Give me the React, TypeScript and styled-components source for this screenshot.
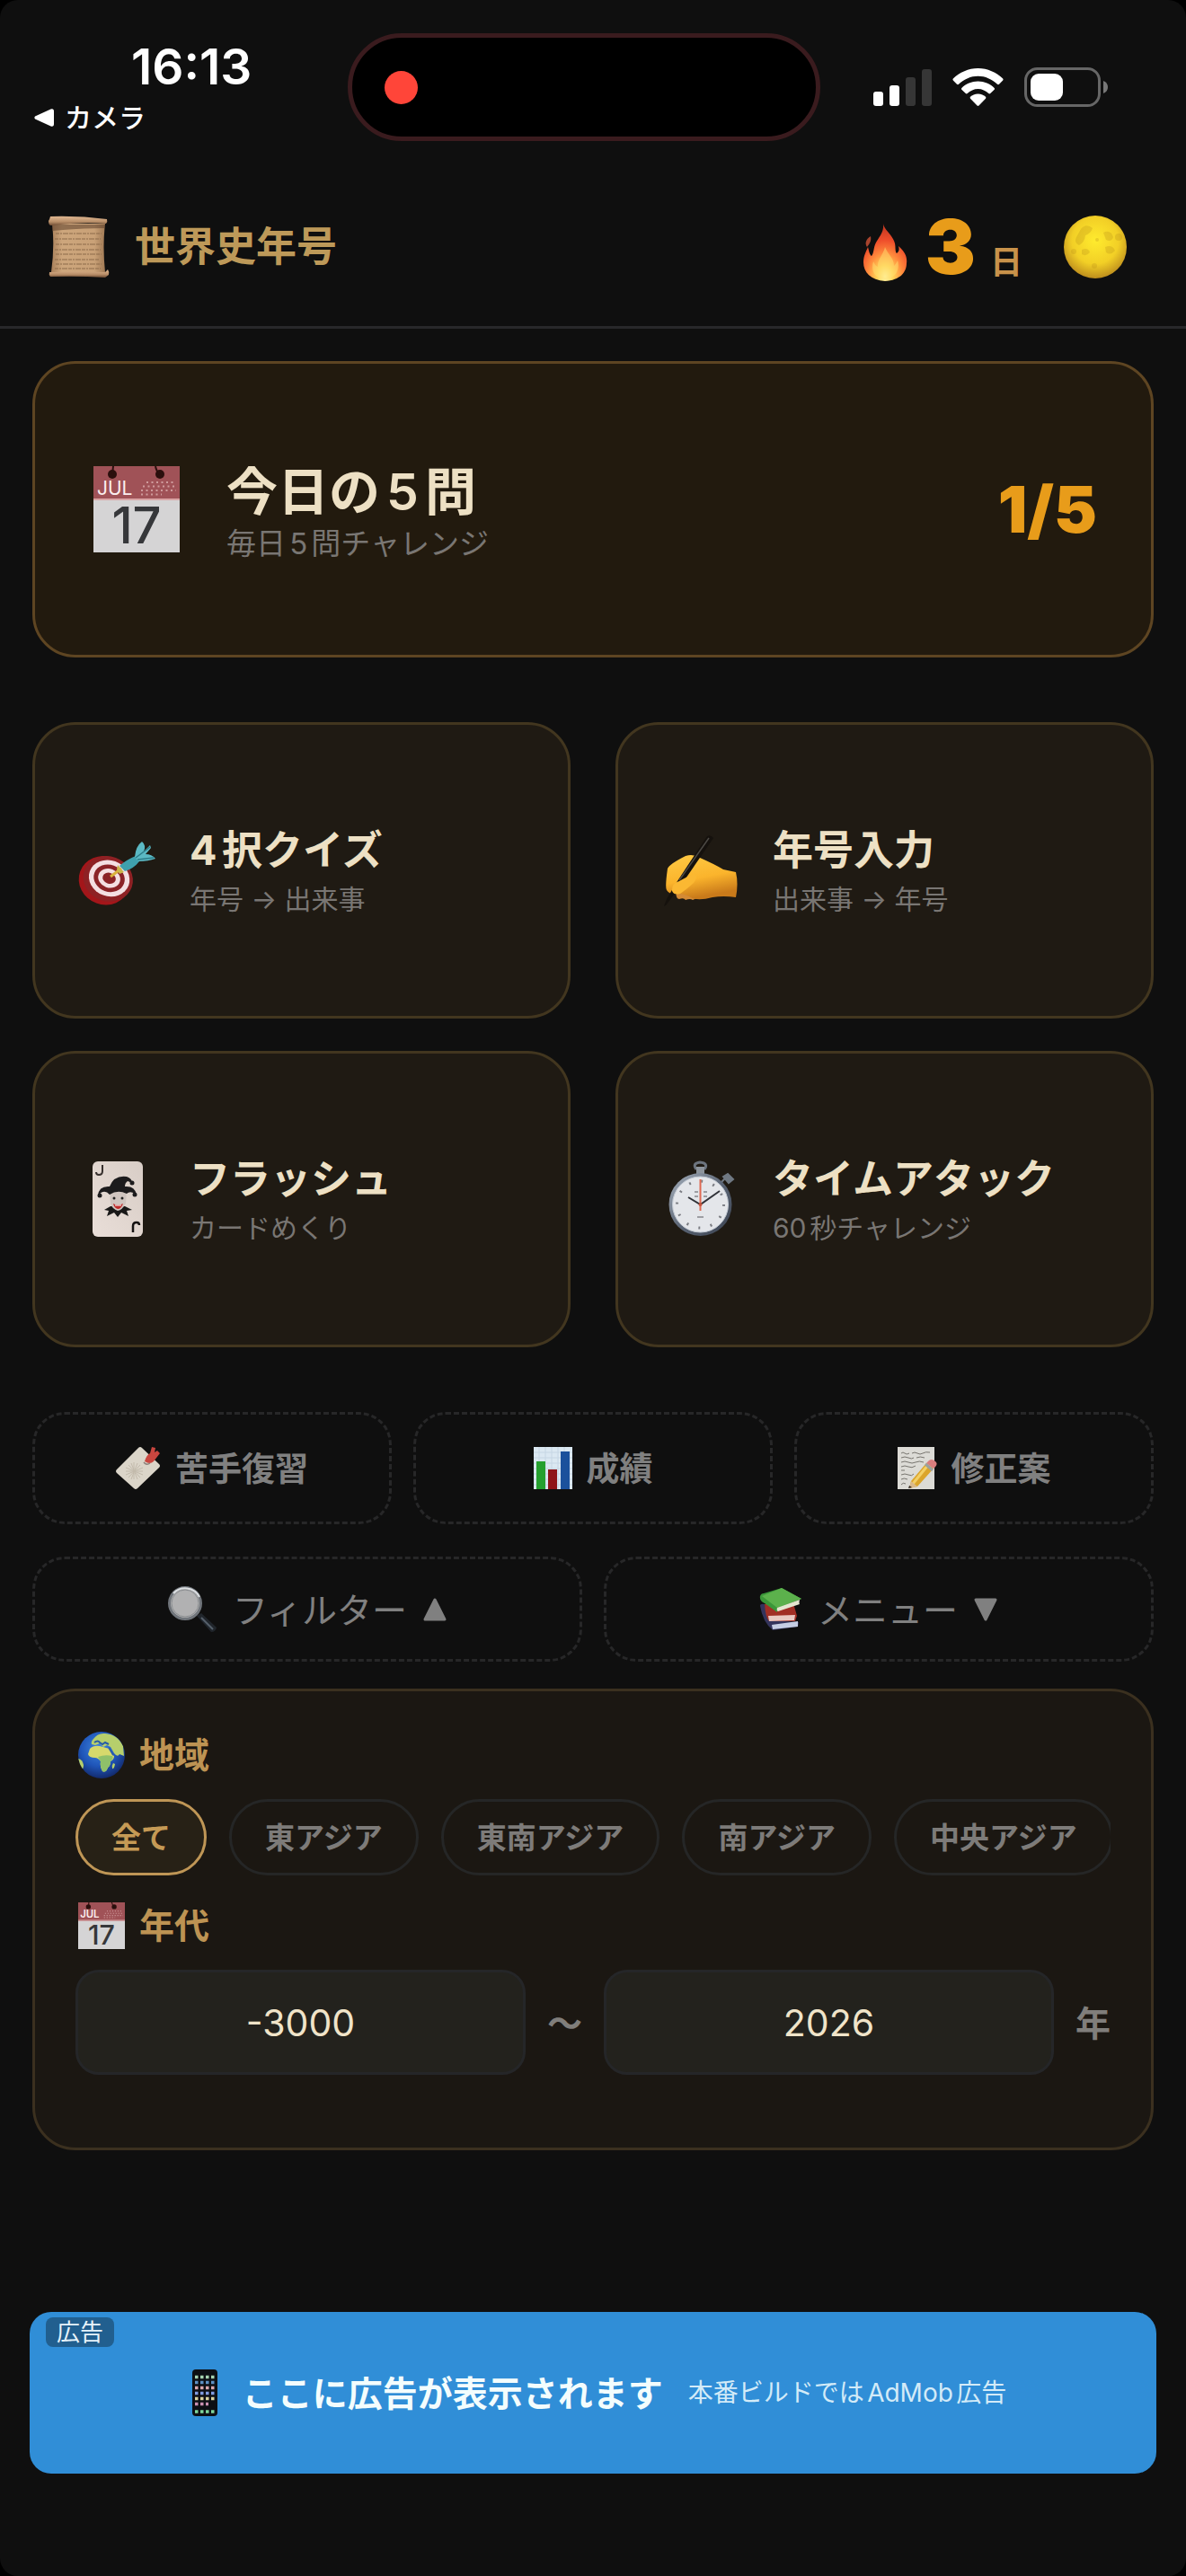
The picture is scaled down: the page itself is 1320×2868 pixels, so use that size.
import React, { useState } from "react";
import styled, { createGlobalStyle } from "styled-components";

const GlobalStyle = createGlobalStyle`
  * { box-sizing: border-box; }
  body {
    margin: 0;
    background: #000;
    font-family: Inter, "Noto Sans CJK JP", sans-serif;
    font-kerning: none;
    text-autospace: normal;
  }
  button, input { font-family: inherit; color: inherit; }
  button { cursor: pointer; }
  svg { display: block; flex: none; overflow: visible; }
`;

const Screen = styled.div`
  min-height: 100vh;
  display: flex;
  flex-direction: column;
  background: #0f0f0f;
  border-radius: 20px;
  overflow: hidden;
`;

/* ---------- status bar ---------- */

const StatusBar = styled.div`
  display: grid;
  grid-template-columns: 1fr auto 1fr;
  align-items: center;
  padding: 37px 20px 29px 0;
  color: #fff;
`;

const StatusLeft = styled.div`
  display: flex;
  flex-direction: column;
  gap: 6px;
  padding-left: 38px;
`;

const Clock = styled.time`
  padding-left: 108px;
  font-size: 55px;
  line-height: 62px;
  font-weight: 600;
`;

const BackButton = styled.button`
  display: flex;
  align-items: center;
  gap: 12px;
  padding: 0;
  border: 0;
  background: none;
  font-size: 30px;
  line-height: 40px;
  font-weight: 500;
`;

const Island = styled.div`
  width: 526px;
  height: 120px;
  display: flex;
  align-items: center;
  padding-left: 36px;
  border: 5px solid #3a1b1e;
  border-radius: 60px;
  background: #000;
`;

const RecDot = styled.span`
  width: 37px;
  height: 37px;
  border-radius: 50%;
  background: #ff4539;
`;

const StatusRight = styled.div`
  display: flex;
  align-items: center;
  justify-content: flex-end;
  gap: 23px;
  padding-right: 66px;
`;

/* ---------- header ---------- */

const Header = styled.header`
  height: 180px;
  display: flex;
  align-items: center;
  justify-content: space-between;
  padding: 0 66px 0 54px;
  border-bottom: 3px solid #28282a;
`;

const Brand = styled.div`
  display: flex;
  align-items: center;
  gap: 28px;
`;

const BrandName = styled.h1`
  margin: 0;
  font-size: 45px;
  line-height: 60px;
  font-weight: 600;
  color: #bd9959;
`;

const HeaderRight = styled.div`
  display: flex;
  align-items: center;
  gap: 46px;
`;

const Streak = styled.div`
  display: flex;
  align-items: flex-end;
  gap: 20px;
`;

const StreakCount = styled.div`
  display: flex;
  align-items: baseline;
  gap: 16px;
  font-size: 84px;
  line-height: 84px;
  font-weight: 900;
  color: #e89c1a;
`;

const StreakUnit = styled.span`
  font-size: 36px;
  line-height: 36px;
  font-weight: 600;
  color: #c8924a;
`;

const ThemeButton = styled.button`
  padding: 0;
  border: 0;
  background: none;
`;

/* ---------- main ---------- */

const Main = styled.main`
  flex: 1;
  padding: 36px 36px 0;
`;

const Card = styled.button<{ $hero?: boolean }>`
  width: 100%;
  height: 330px;
  display: flex;
  align-items: center;
  gap: ${(p) => (p.$hero ? "48px" : "36px")};
  padding: ${(p) => (p.$hero ? "0 60px" : "0 48px")};
  border: 3px solid ${(p) => (p.$hero ? "#5e4522" : "#42361f")};
  border-radius: 48px;
  background: ${(p) => (p.$hero ? "#221a0e" : "#1f1a13")};
  text-align: left;
`;

const CardIcon = styled.span<{ $hero?: boolean }>`
  width: ${(p) => (p.$hero ? "105px" : "88px")};
  display: flex;
  justify-content: center;
  flex: none;
`;

const CardText = styled.span`
  display: flex;
  flex-direction: column;
  padding-top: 4px;
`;

const CardTitle = styled.span<{ $hero?: boolean }>`
  font-size: ${(p) => (p.$hero ? "57px" : "45px")};
  line-height: ${(p) => (p.$hero ? "72px" : "60px")};
  font-weight: ${(p) => (p.$hero ? 600 : 700)};
  color: #ede0c4;
`;

const CardSub = styled.span<{ $hero?: boolean }>`
  font-size: ${(p) => (p.$hero ? "33px" : "30px")};
  line-height: ${(p) => (p.$hero ? "42px" : "48px")};
  color: #797673;
`;

const Progress = styled.span`
  margin-left: auto;
  font-size: 72px;
  line-height: 84px;
  font-weight: 900;
  color: #e89c1a;
`;

const ModeGrid = styled.div`
  display: grid;
  grid-template-columns: 1fr 1fr;
  gap: 36px 50px;
  margin: 72px 0;
`;

const DashedRow = styled.div<{ $cols: number }>`
  display: grid;
  grid-template-columns: repeat(${(p) => p.$cols}, 1fr);
  gap: 24px;
  margin-bottom: ${(p) => (p.$cols === 3 ? "36px" : "30px")};
`;

const DashedButton = styled.button<{ $tall?: boolean }>`
  height: ${(p) => (p.$tall ? "125px" : "117px")};
  display: flex;
  align-items: center;
  justify-content: center;
  gap: ${(p) => (p.$tall ? "16px" : "18px")};
  padding: 0;
  border: 3px dashed #272728;
  border-radius: 36px;
  background: none;
  color: #808080;
  font-size: ${(p) => (p.$tall ? "37px" : "39px")};
  font-weight: ${(p) => (p.$tall ? 600 : 400)};
`;

const ButtonText = styled.span`
  padding-bottom: 4px;
`;

/* ---------- filter panel ---------- */

const Panel = styled.section`
  padding: 45px 45px 81px;
  border: 3px solid #3b301f;
  border-radius: 48px;
  background: #1b1712;
`;

const PanelLabel = styled.label`
  height: 51px;
  display: flex;
  align-items: center;
  gap: 16px;
  padding-left: 3px;
  margin-bottom: 24px;
  font-size: 39px;
  line-height: 51px;
  font-weight: 600;
  color: #bd9353;
`;

const Chips = styled.div`
  display: flex;
  gap: 25px;
  margin-bottom: 30px;
  overflow: hidden;
`;

const Chip = styled.button<{ $active: boolean }>`
  flex: none;
  height: 85px;
  padding: 0 37px 4px;
  border: 3px solid ${(p) => (p.$active ? "#bf9656" : "#252626")};
  border-radius: 43px;
  background: ${(p) => (p.$active ? "#272116" : "transparent")};
  color: ${(p) => (p.$active ? "#c59a55" : "#7d7b79")};
  font-size: 33px;
  font-weight: 600;
`;

const YearRow = styled.div`
  display: flex;
  align-items: center;
  gap: 24px;
`;

const YearText = styled.span`
  padding-bottom: 4px;
  font-size: 39px;
  font-weight: 600;
  color: #807e7b;
`;

const YearInput = styled.input`
  flex: 1;
  min-width: 0;
  height: 117px;
  padding: 0;
  border: 3px solid #252628;
  border-radius: 26px;
  background: #23221d;
  color: #f0e4c9;
  font-size: 41px;
  text-align: center;
  outline: none;
`;

/* ---------- ad ---------- */

const AdBanner = styled.aside`
  position: relative;
  height: 180px;
  display: flex;
  align-items: center;
  justify-content: center;
  gap: 28px;
  padding-left: 14px;
  margin: 0 33px 114px;
  border-radius: 24px;
  background: #308ed7;
`;

const AdBadge = styled.span`
  position: absolute;
  top: 6px;
  left: 18px;
  padding: 0 12px;
  border-radius: 8px;
  background: #215f8f;
  color: #e6f3fa;
  font-size: 26px;
  line-height: 33px;
`;

const AdTitle = styled.strong`
  font-size: 39px;
  line-height: 51px;
  font-weight: 700;
  color: #f3fdfd;
`;

const AdNote = styled.span`
  font-size: 28px;
  line-height: 51px;
  color: #d3ebf8;
`;

/* ---------- icons ---------- */

const SignalIcon = () => (
  <svg width="65" height="41" viewBox="0 0 65 41">
    <rect x="0" y="25" width="11" height="16" rx="3" fill="#fff" />
    <rect x="18" y="18" width="11" height="23" rx="3" fill="#fff" />
    <rect x="36" y="9" width="11" height="32" rx="3" fill="#363636" />
    <rect x="54" y="0" width="11" height="41" rx="3" fill="#363636" />
  </svg>
);

const WifiIcon = () => (
  <svg width="57" height="42" viewBox="0 0 57 42" fill="#fff">
    <path d="M28.500 0C39 0 49 4.500 56.200 11.600Q57 12.500 56.200 13.400L52 17.800Q51 18.700 50 17.800C44 12 36.500 8.700 28.500 8.700S13 12 7 17.800Q6 18.700 5 17.800L.8 13.400Q0 12.500.8 11.600C8 4.500 18 0 28.500 0Z" />
    <path d="M28.500 14.500C35.500 14.500 42 17.400 46.700 21.900Q47.500 22.800 46.700 23.700L42.200 28Q41.300 28.800 40.300 28C37.200 25 33 23 28.500 23S19.800 25 16.700 28Q15.700 28.800 14.800 28L10.300 23.700Q9.500 22.800 10.300 21.900C15 17.400 21.500 14.500 28.500 14.500Z" />
    <path d="M28.500 28.500C32 28.500 35 30 37 31.800Q37.800 32.800 37 33.700L29.500 41.500Q28.500 42.300 27.500 41.500L20 33.700Q19.200 32.800 20 31.800C22 30 25 28.500 28.500 28.500Z" />
  </svg>
);

const BatteryIcon = () => (
  <svg width="94" height="44" viewBox="0 0 94 44">
    <rect x="1.500" y="1.500" width="82" height="41" rx="13" fill="none" stroke="#666" strokeWidth="3" />
    <rect x="7" y="7" width="36" height="30" rx="9" fill="#fff" />
    <path d="M88 15Q93 17 93 22T88 29Z" fill="#777" />
  </svg>
);

const ScrollIcon = () => (
  <svg width="68" height="70" viewBox="0 0 68 70">
    <defs>
      <linearGradient id="paper" x1="0" x2="1">
        <stop offset="0" stopColor="#a9805a" />
        <stop offset=".2" stopColor="#cda67c" />
        <stop offset=".8" stopColor="#c9a177" />
        <stop offset="1" stopColor="#a07954" />
      </linearGradient>
      <linearGradient id="roll" x1="0" y1="0" x2="0" y2="1">
        <stop offset="0" stopColor="#e0b892" />
        <stop offset=".6" stopColor="#b98f69" />
        <stop offset="1" stopColor="#6f4d34" />
      </linearGradient>
    </defs>
    <path d="M4 9H63Q60 34 63 63H3Q7 34 4 9Z" fill="url(#paper)" />
    <path d="M4 10H63V14Q35 14 4 17Z" fill="#5d402c" opacity=".55" />
    <g stroke="#8c6a4b" strokeWidth="1" strokeDasharray="4 1 2 1 6 1">
      <path d="M8 20H59M7 26H58M8 32H59M7 38H58M8 43H59M7 49H57M8 54H59M7 59H58" />
    </g>
    <path d="M2 1Q34 0 65 4Q66 7 64 9Q34 7 3 11Q0 11 0 6Q1 5 2 1Z" fill="url(#roll)" />
    <path d="M1 63Q34 62 63 63L66 60Q68 63 67 66L63 69Q34 67 2 68Q0 66 1 63Z" fill="url(#roll)" />
  </svg>
);

const FireIcon = () => (
  <svg width="49" height="68" viewBox="0 0 49 68">
    <defs>
      <radialGradient id="flame" cx=".5" cy=".92" r=".85">
        <stop offset="0" stopColor="#fff9b0" />
        <stop offset=".22" stopColor="#ffd458" />
        <stop offset=".48" stopColor="#ff8a3c" />
        <stop offset=".75" stopColor="#ee4d2b" />
        <stop offset="1" stopColor="#c93a22" />
      </radialGradient>
    </defs>
    <path d="M22 0C23 7 33 13 35 22C36 27 35 31 37 33C40 31 40 28 39 25C46 31 49 37 48 44C48 54 41 63 24 64C8 63 0 54 0 43C0 36 3 31 5 26C6 30 7 35 9 36C12 32 11 26 14 21C18 14 23 9 22 0Z" fill="url(#flame)" />
    <path d="M8 14C9 19 7 22 4 26C1 22 3 17 8 14Z" fill="#a8442e" />
    <path d="M24 26C27 34 34 38 34 47C36 45 37 43 38 41C41 51 36 61 24 62C12 61 8 52 11 42C13 46 14 47 16 48C15 40 22 35 24 26Z" fill="#ffdf70" opacity=".5" />
  </svg>
);

const MoonIcon = () => (
  <svg width="70" height="70" viewBox="0 0 70 70">
    <defs>
      <radialGradient id="moon" cx=".5" cy=".4" r=".62">
        <stop offset="0" stopColor="#ffeb2e" />
        <stop offset=".6" stopColor="#f2cf26" />
        <stop offset="1" stopColor="#b8871c" />
      </radialGradient>
    </defs>
    <circle cx="35" cy="35" r="35" fill="url(#moon)" />
    <g fill="#b88e18" opacity=".28">
      <path d="M19 15Q25 8 32 14Q30 20 24 22Q23 30 17 33Q11 30 14 24Z" />
      <path d="M44 19Q52 15 55 24Q53 30 47 27Z" />
      <path d="M20 38Q27 35 29 41Q25 46 20 43Z" />
      <path d="M46 35Q54 32 57 39Q52 45 47 41Z" />
      <circle cx="61" cy="24" r="4" />
      <circle cx="11" cy="40" r="3" />
      <circle cx="37" cy="27" r="2" />
      <circle cx="34" cy="56" r="3" />
    </g>
  </svg>
);

const CalendarIcon = ({ size }: { size: number }) => (
  <svg width={size} height={size} viewBox="0 0 96 96">
    <rect width="96" height="96" fill="#d5d4d5" />
    <rect width="96" height="38" fill="#a05257" />
    <rect y="36" width="96" height="2" fill="#d9a5a5" />
    <circle cx="21" cy="9" r="5" fill="#2b0f0d" />
    <circle cx="74" cy="9" r="5" fill="#2b0f0d" />
    <path d="M21 9L22 0M74 9Q70 6 69 0" stroke="#2b0f0d" strokeWidth="2" fill="none" />
    <path d="M59 18H92M55 22.500H92M53 27H92M53 31.500H76" stroke="#cf9c9d" strokeWidth="2" strokeDasharray="2 3.500" />
    <text x="4" y="32" fontSize="21" fill="#fbeeee" fontFamily="Inter, sans-serif">JUL</text>
    <text x="48" y="86" fontSize="56" fill="#36373a" textAnchor="middle" fontWeight="500" fontFamily="Inter, sans-serif">17</text>
  </svg>
);

const TargetIcon = () => (
  <svg width="84" height="84" viewBox="0 -10 84 84">
    <g transform="rotate(20 30 42)">
      <ellipse cx="28" cy="44" rx="29" ry="27" fill="#a3161a" />
      <ellipse cx="31" cy="41" rx="28" ry="25" fill="#8e2124" />
      <ellipse cx="32" cy="40" rx="23" ry="20" fill="#f4dfe2" />
      <ellipse cx="32" cy="40" rx="17.500" ry="15" fill="#8b2327" />
      <ellipse cx="32" cy="40" rx="12.500" ry="10.500" fill="#f4dfe2" />
      <ellipse cx="32" cy="40" rx="7.500" ry="6" fill="#8b2327" />
    </g>
    <path d="M34 39L46 30" stroke="#d9b13a" strokeWidth="3" />
    <path d="M42 26L49 34L44 36L41 31Z" fill="#c9b64a" />
    <path d="M44 27Q52 20 62 16L66 22Q60 30 50 33Z" fill="#3fa0ad" />
    <path d="M61 17Q62 5 69 0Q74 4 71 11L78 4L79 7L73 14Q80 14 84 19Q76 22 65 22Z" fill="#5bb9c4" />
    <path d="M62 18L78 6M64 20L82 18" stroke="#2b7c89" strokeWidth="1.500" />
  </svg>
);

const HandIcon = () => (
  <svg width="82" height="79" viewBox="0 0 82 79">
    <defs>
      <linearGradient id="skin" x1="0" y1="0" x2=".3" y2="1">
        <stop offset="0" stopColor="#ffcb45" />
        <stop offset=".6" stopColor="#fbb42c" />
        <stop offset="1" stopColor="#c97a1a" />
      </linearGradient>
    </defs>
    <path d="M14 60Q12 70 17 71Q22 69 24 72Q29 70 32 72Q37 69 40 71L38 58Z" fill="#d48a35" />
    <path d="M4 37Q6 32 24 23Q32 20 40 25Q56 32 66 38L80 41Q83 54 80 69Q66 67 54 69Q36 74 28 68Q20 64 12 65Q6 66 3 61Q1 58 4 37Z" fill="url(#skin)" />
    <path d="M48 1Q52 -1 55 3L20 54L2 78L0 79L3 71L13 54Z" fill="#15110d" />
    <path d="M50 3L17 50" stroke="#4d4a45" strokeWidth="1.500" />
    <path d="M9 62Q8 54 17 51Q26 46 33 43Q39 44 33 53Q24 61 18 65Q11 67 9 62Z" fill="#fbb832" />
  </svg>
);

const JokerIcon = () => (
  <svg width="56" height="84" viewBox="0 0 56 84">
    <defs>
      <linearGradient id="card" x1="1" x2="0" y2="1">
        <stop offset="0" stopColor="#d8cdc6" />
        <stop offset="1" stopColor="#e9ded8" />
      </linearGradient>
    </defs>
    <rect width="56" height="84" rx="6" fill="url(#card)" />
    <path d="M11 4V11Q11 15 7 15Q4 15 4 12" stroke="#37302e" strokeWidth="2" fill="none" />
    <path d="M45 79V72Q45 68 49 68Q52 68 52 71" stroke="#161313" strokeWidth="2.500" fill="none" />
    <path d="M13 54L20 50H36L44 54L38 55L40 61L32 57L28 62L24 57L16 61L18 55Z" fill="#191818" />
    <path d="M19 33H38L37 47Q33 54 28 55Q22 53 20 47Z" fill="#cfc4bf" />
    <path d="M6 38Q7 27 19 28Q24 15 38 17Q44 19 44 24L39 22Q36 24 36 28Q47 27 49 37Q42 32 38 36Q28 31 19 37Q13 30 6 38Z" fill="#1c1b1d" />
    <circle cx="8" cy="38" r="2.500" fill="#1c1b1d" />
    <circle cx="44" cy="24" r="2.500" fill="#1c1b1d" />
    <circle cx="47" cy="37" r="2.500" fill="#1c1b1d" />
    <circle cx="24" cy="41" r="1.500" fill="#222" />
    <circle cx="33" cy="41" r="1.500" fill="#222" />
    <path d="M23 47Q28 50 34 47Q32 53 28 53Q24 52 23 47Z" fill="#bf2a2a" />
    <path d="M25 49H32" stroke="#fff" strokeWidth="1" />
  </svg>
);

const StopwatchIcon = () => (
  <svg width="72" height="84" viewBox="0 0 72 84">
    <defs>
      <linearGradient id="steel" x1="0" y1="0" x2="1" y2="1">
        <stop offset="0" stopColor="#a9b3bf" />
        <stop offset=".5" stopColor="#5c6676" />
        <stop offset="1" stopColor="#39414f" />
      </linearGradient>
    </defs>
    <path d="M31 9Q26 2 35 1Q45 2 40 9" stroke="#6c747e" strokeWidth="3" fill="none" />
    <rect x="31" y="6" width="9" height="9" fill="#8d949c" />
    <path d="M58 24L64 18M61 17L66 14L72 20L67 24Z" stroke="#707983" strokeWidth="2" fill="#707983" />
    <circle cx="35.500" cy="48" r="35" fill="url(#steel)" />
    <circle cx="35.500" cy="48" r="31" fill="#e4e6ea" stroke="#c3cad4" strokeWidth="1" />
    <circle cx="35.500" cy="48" r="26" fill="none" stroke="#7b7d83" strokeWidth="3" strokeDasharray="2 11.610" />
    <path d="M29 34H33M39 34H43M29 39H33M39 39H43M32 62H39" stroke="#85878c" strokeWidth="1.500" />
    <path d="M35.500 20V55" stroke="#df6a52" strokeWidth="2" />
    <path d="M22 40L35.500 48L57 33" stroke="#303238" strokeWidth="2" fill="none" />
    <circle cx="35.500" cy="48" r="2" fill="#c6543d" />
  </svg>
);

const TagIcon = () => (
  <svg width="50" height="47" viewBox="0 0 50 47">
    <path d="M25 1Q27-1 29 1L48 19Q50 21 48 23L24 46Q22 48 20 46L1 29Q-1 27 1 25Z" fill="#dbd5c9" />
    <g stroke="#c2baab" strokeWidth="1">
      <path d="M20 17V36M11 27H30M14 20L27 34M27 20L14 34M17 18L24 36M24 18L17 36M11 23L30 31M11 31L30 23" />
    </g>
    <path d="M32 16Q34 9 38 7L40 0L44 1L43 6L46 4L49 7L42 16Q38 20 32 16Z" fill="#c9463f" />
    <path d="M31 17Q34 21 38 18" stroke="#8d817a" strokeWidth="1.500" fill="none" />
  </svg>
);

const ChartIcon = () => (
  <svg width="43" height="47" viewBox="0 0 43 47">
    <rect width="43" height="47" fill="#dbe8f2" />
    <path d="M0 6H43M0 12H43M0 18H43M0 24H43M0 30H43M0 36H43M0 42H43M6 0V47M13 0V47M20 0V47M27 0V47M34 0V47" stroke="#c6d6e4" strokeWidth="1" />
    <rect x="3" y="16" width="10" height="31" fill="#25a02f" />
    <rect x="16" y="25" width="10" height="22" fill="#8f1418" />
    <rect x="30" y="5" width="10" height="42" fill="#1b519c" />
  </svg>
);

const MemoIcon = () => (
  <svg width="44" height="47" viewBox="0 0 44 47">
    <rect width="41" height="47" fill="#dcdbd6" />
    <path d="M4 7Q6 5 8 7T13 7M16 7Q19 5 22 7T28 7T36 6M4 12Q8 10 12 12T18 12M21 12Q25 10 30 12M4 17Q8 15 12 17T20 17T29 17M4 22Q8 20 12 22T20 21M4 26H8M4 31Q8 29 12 31T18 30M4 36Q7 34 11 36M4 42Q6 39 9 41" stroke="#77756f" strokeWidth="1" fill="none" />
    <path d="M32 18L40 24L22 44L13 46L15 38Z" fill="#dba52b" />
    <path d="M34 20L17 41" stroke="#f3d067" strokeWidth="3" />
    <path d="M15 38L22 44L13 46Z" fill="#d9b98c" />
    <path d="M13 43L16 45L12 46Z" fill="#2b2520" />
    <path d="M32 18L35 15Q39 12 43 17Q45 20 40 24Z" fill="#d97d7d" />
    <path d="M31 19L39 26" stroke="#9aa09f" strokeWidth="3" />
  </svg>
);

const MagnifierIcon = () => (
  <svg width="54" height="52" viewBox="0 0 54 52">
    <path d="M32 33L37 30L54 46Q53 51 48 51Z" fill="#20252b" />
    <path d="M37 35L50 48" stroke="#55606b" strokeWidth="2" />
    <circle cx="19" cy="19" r="17.500" fill="#b1b1b2" stroke="#70757b" strokeWidth="3" />
    <path d="M6 8A18 18 0 0 1 35 12" stroke="#dcdfe2" strokeWidth="2" fill="none" />
    <circle cx="19" cy="19" r="15" fill="none" stroke="#8b8e91" strokeWidth="1" />
  </svg>
);

const BooksIcon = () => (
  <svg width="46" height="48" viewBox="0 0 46 48">
    <path d="M0 20Q0 17 5 18L10 36L43 38L42 43L14 47Q3 38 0 20Z" fill="#34345c" />
    <path d="M13 41L42 37V43L14 46Z" fill="#c5cde3" />
    <path d="M5 18L37 17L41 31L39 37H10Q6 33 5 18Z" fill="#a12f25" />
    <path d="M9 31L39 30L38 36L10 37Z" fill="#e9c9c2" />
    <path d="M0 9Q1 6 4 6L24 0L46 12L19 23L19 27L5 17Q-1 14 0 9Z" fill="#3b9739" />
    <path d="M24 0L46 12L19 22L2 9Z" fill="#5cb14c" />
    <path d="M19 22L44 13Q43 17 44 18L20 26Q18 25 19 22Z" fill="#e5e6cf" />
  </svg>
);

const GlobeIcon = () => (
  <svg width="52" height="52" viewBox="0 0 52 52">
    <defs>
      <radialGradient id="sea" cx=".45" cy=".35" r=".65">
        <stop offset="0" stopColor="#3f86e0" />
        <stop offset=".6" stopColor="#1f55b8" />
        <stop offset="1" stopColor="#132b6e" />
      </radialGradient>
      <clipPath id="earth"><circle cx="26" cy="26" r="26" /></clipPath>
    </defs>
    <circle cx="26" cy="26" r="26" fill="url(#sea)" />
    <g clipPath="url(#earth)" fill="#b6cf6c">
      <path d="M17 8Q22 1 30 2Q44 3 50 16L51 27L46 25Q44 29 40 24L36 17L32 15L28 17L24 13L19 15L15 14Q14 11 17 8Z" />
      <path d="M13 19Q17 15 24 16Q31 18 35 19L38 26L40 27Q40 31 36 33Q36 38 33 40Q31 46 27 44Q24 39 25 33Q22 29 19 29Q12 29 11 25Z" fill="#d6d96c" />
      <path d="M22 28Q30 25 38 27Q40 30 36 33Q36 38 33 40Q31 46 27 44Q24 38 25 33Z" fill="#8fc06a" />
      <path d="M39 35L41 36Q40 42 38 41Q37 38 39 35Z" />
      <path d="M0 30Q5 31 6 37Q6 42 3 43L0 38Z" />
    </g>
    <path d="M18 12Q22 9 24 12L27 14L30 12L34 14" stroke="#275ca6" strokeWidth="2" fill="none" />
    <path d="M34 18L39 26" stroke="#275ca6" strokeWidth="1.500" />
  </svg>
);

const PhoneIcon = () => (
  <svg width="28" height="52" viewBox="0 0 28 52">
    <rect width="28" height="52" rx="4" fill="#0d0f14" />
    <g strokeWidth="3.500" strokeDasharray="3.500 2.500">
      <path d="M3 8.500H26" stroke="#a6d3b0" />
      <path d="M3 14.500H26" stroke="#5c8fc2" />
      <path d="M3 20.500H26" stroke="#d9a7ae" />
      <path d="M3 26.500H26" stroke="#7f9be0" />
      <path d="M3 32.500H26" stroke="#d7d3a0" />
      <path d="M3 38.500H18" stroke="#c98fb0" />
      <path d="M3 47H26" stroke="#7fd69c" />
    </g>
  </svg>
);

const Arrow = ({ up }: { up?: boolean }) => (
  <svg width="26" height="26" viewBox="0 0 26 26" fill="#808080" stroke="#808080" strokeWidth="3" strokeLinejoin="round">
    <path d={up ? "M13 2L24 24H2Z" : "M2 2H24L13 24Z"} />
  </svg>
);

const modes = [
  { icon: <TargetIcon />, title: "4択クイズ", sub: "年号 → 出来事" },
  { icon: <HandIcon />, title: "年号入力", sub: "出来事 → 年号" },
  { icon: <JokerIcon />, title: "フラッシュ", sub: "カードめくり" },
  { icon: <StopwatchIcon />, title: "タイムアタック", sub: "60秒チャレンジ" },
];

const regions = ["全て", "東アジア", "東南アジア", "南アジア", "中央アジア"];

export default function App() {
  const [region, setRegion] = useState("全て");
  const [from, setFrom] = useState("-3000");
  const [to, setTo] = useState("2026");

  return (
    <Screen lang="ja">
      <GlobalStyle />
      <StatusBar>
        <StatusLeft>
          <Clock>16:13</Clock>
          <BackButton>
            <svg width="22" height="20" viewBox="0 0 22 20" fill="#fff">
              <path d="M1 8.500L18.500.5Q22-.5 22 3V17Q22 20.500 18.500 19.500L1 11.500Q-.5 10 1 8.500Z" />
            </svg>
            カメラ
          </BackButton>
        </StatusLeft>
        <Island>
          <RecDot />
        </Island>
        <StatusRight>
          <SignalIcon />
          <WifiIcon />
          <BatteryIcon />
        </StatusRight>
      </StatusBar>

      <Header>
        <Brand>
          <ScrollIcon />
          <BrandName>世界史年号</BrandName>
        </Brand>
        <HeaderRight>
          <Streak>
            <FireIcon />
            <StreakCount>
              3<StreakUnit>日</StreakUnit>
            </StreakCount>
          </Streak>
          <ThemeButton aria-label="テーマ">
            <MoonIcon />
          </ThemeButton>
        </HeaderRight>
      </Header>

      <Main>
        <Card $hero>
          <CardIcon $hero>
            <CalendarIcon size={96} />
          </CardIcon>
          <CardText>
            <CardTitle $hero>今日の5問</CardTitle>
            <CardSub $hero>毎日5問チャレンジ</CardSub>
          </CardText>
          <Progress>1/5</Progress>
        </Card>

        <ModeGrid>
          {modes.map((m) => (
            <Card key={m.title}>
              <CardIcon>{m.icon}</CardIcon>
              <CardText>
                <CardTitle>{m.title}</CardTitle>
                <CardSub>{m.sub}</CardSub>
              </CardText>
            </Card>
          ))}
        </ModeGrid>

        <DashedRow $cols={3}>
          <DashedButton $tall><TagIcon /><ButtonText>苦手復習</ButtonText></DashedButton>
          <DashedButton $tall><ChartIcon /><ButtonText>成績</ButtonText></DashedButton>
          <DashedButton $tall><MemoIcon /><ButtonText>修正案</ButtonText></DashedButton>
        </DashedRow>
        <DashedRow $cols={2}>
          <DashedButton><MagnifierIcon /><ButtonText>フィルター</ButtonText><Arrow up /></DashedButton>
          <DashedButton><BooksIcon /><ButtonText>メニュー</ButtonText><Arrow /></DashedButton>
        </DashedRow>

        <Panel>
          <PanelLabel as="div"><GlobeIcon />地域</PanelLabel>
          <Chips>
            {regions.map((r) => (
              <Chip key={r} $active={r === region} aria-pressed={r === region} onClick={() => setRegion(r)}>
                {r}
              </Chip>
            ))}
          </Chips>
          <PanelLabel htmlFor="year-from"><CalendarIcon size={52} />年代</PanelLabel>
          <YearRow>
            <YearInput id="year-from" value={from} onChange={(e) => setFrom(e.target.value)} />
            <YearText>〜</YearText>
            <YearInput id="year-to" aria-label="年代（終わり）" value={to} onChange={(e) => setTo(e.target.value)} />
            <YearText>年</YearText>
          </YearRow>
        </Panel>
      </Main>

      <AdBanner>
        <AdBadge>広告</AdBadge>
        <PhoneIcon />
        <AdTitle>ここに広告が表示されます</AdTitle>
        <AdNote>本番ビルドではAdMob広告</AdNote>
      </AdBanner>
    </Screen>
  );
}
